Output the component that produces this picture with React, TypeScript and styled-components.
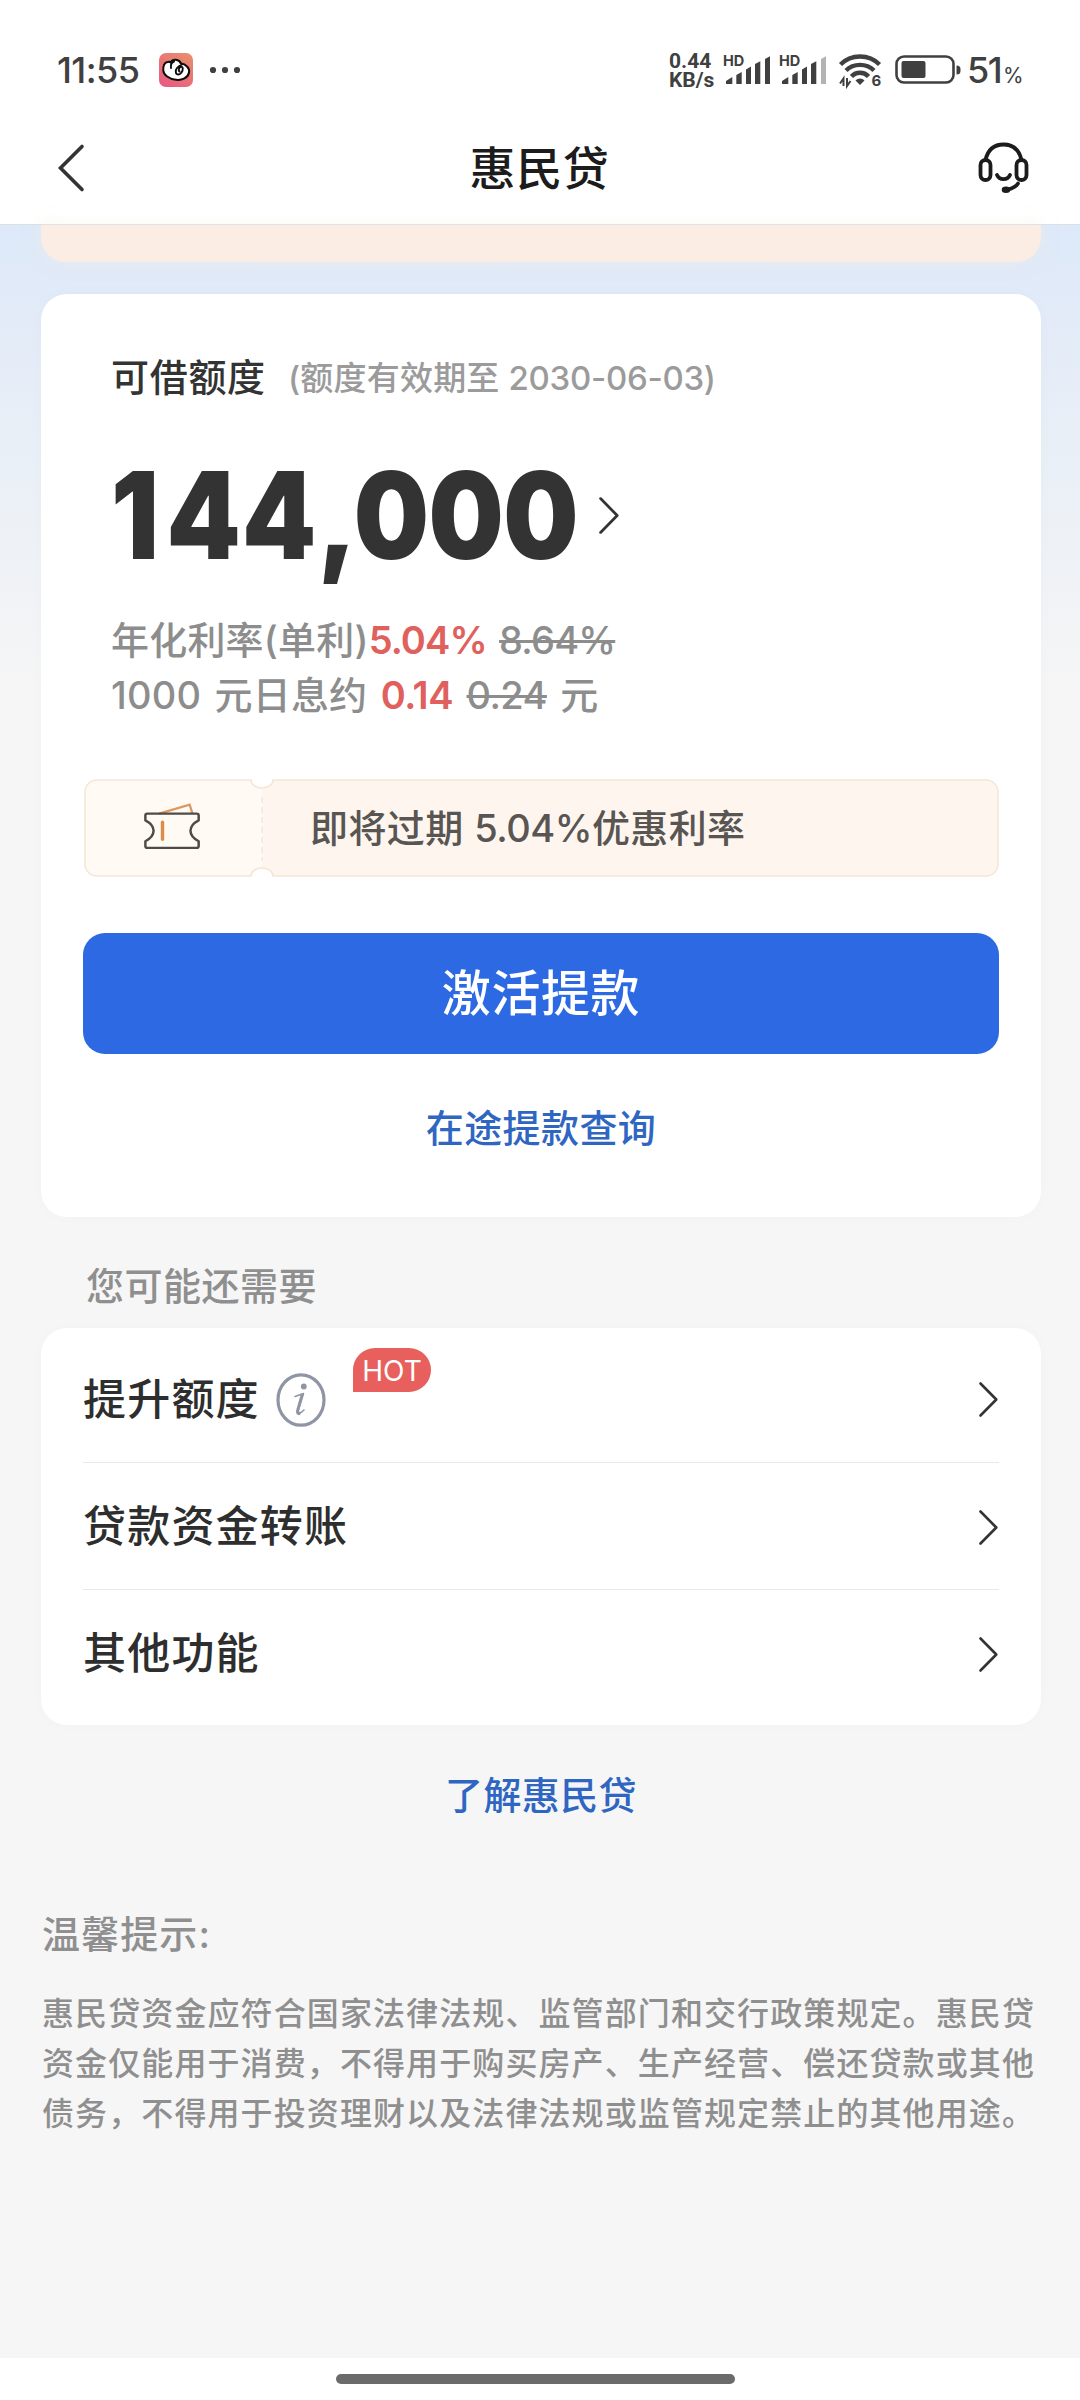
import React from 'react';
import styled, { createGlobalStyle } from 'styled-components';

const GlobalStyle = createGlobalStyle`
  * { box-sizing: border-box; }
  body {
    margin: 0;
    background: #f6f6f6;
    font-family: Inter, 'Noto Sans CJK SC', sans-serif;
    font-weight: 500;
    color: #333;
  }
  svg { display: block; flex: none; overflow: visible; }
`;

const Screen = styled.div`
  width: 1080px;
  height: 2400px;
  display: flex;
  flex-direction: column;
  overflow: hidden;
  background: #f6f6f6;
`;

const TopBar = styled.header`
  height: 225px;
  flex: none;
  background: #fff;
  border-bottom: 1px solid #dcdfe4;
`;

const StatusBar = styled.div`
  height: 112px;
  padding: 28px 55px 0 57px;
  display: flex;
  align-items: center;
  color: #404040;
`;

const Clock = styled.span`
  width: 102px;
  font-size: 36px;
  font-weight: 500;
  letter-spacing: -0.6px;
  line-height: 40px;
`;

const StatusRight = styled.div`
  margin-left: auto;
  width: 356px;
  display: flex;
  align-items: center;
`;

const NetSpeed = styled.span`
  width: 54px;
  padding-top: 2px;
  display: flex;
  flex-direction: column;
  font-family: Roboto, sans-serif;
  font-size: 21px;
  font-weight: 700;
  line-height: 19px;
  white-space: nowrap;
`;

const BatteryText = styled.span`
  margin-left: 6px;
  display: flex;
  align-items: baseline;
  font-size: 36px;
  letter-spacing: -1.6px;
  line-height: 40px;
  white-space: nowrap;
`;

const Percent = styled.span`
  margin-left: 2px;
  font-size: 21px;
  font-weight: 400;
  line-height: 24px;
`;

const NavBar = styled.nav`
  height: 112px;
  padding: 0 49px 0 58px;
  display: grid;
  grid-template-columns: 54px 1fr 54px;
  align-items: center;
`;

const NavTitle = styled.h1`
  margin: 0;
  padding-right: 10px;
  text-align: center;
  font-size: 46px;
  font-weight: 500;
  letter-spacing: 0.6px;
  line-height: 60px;
  color: #1c1c1c;
`;

const Content = styled.main`
  flex: 1;
  padding: 0 39px 0 41px;
  display: flex;
  flex-direction: column;
  background: linear-gradient(#dde9f9 0, #e3ebf8 100px, #e8eff7 210px, #eff2f6 340px, #f6f6f6 470px);
`;

const Banner = styled.div`
  height: 37px;
  flex: none;
  border-radius: 0 0 25px 25px;
  background: #fbede3;
  box-shadow: 0 0 16px rgba(245, 240, 225, 0.5);
`;

const LoanCard = styled.section`
  height: 923px;
  margin-top: 32px;
  padding: 0 42px;
  flex: none;
  border-radius: 26px;
  background: #fff;
  box-shadow: 0 0 16px rgba(0, 0, 0, 0.02);
  display: flex;
  flex-direction: column;
`;

const Quota = styled.div`
  padding: 58px 0 0 28px;
`;

const QuotaHead = styled.div`
  height: 50px;
  display: flex;
  align-items: center;
  white-space: nowrap;
`;

const QuotaTitle = styled.h2`
  width: 177px;
  margin: 0;
  font-size: 38px;
  font-weight: 500;
  letter-spacing: 0.7px;
  line-height: 48px;
`;

const QuotaNote = styled.span`
  padding-top: 2px;
  font-size: 33px;
  line-height: 50px;
  letter-spacing: 0.2px;
  color: #9b9b9b;
`;

const QuotaDate = styled.span`
  letter-spacing: -0.3px;
`;

const AmountRow = styled.div`
  height: 130px;
  margin-top: 48px;
  display: flex;
  align-items: center;
`;

const Amount = styled.span`
  width: 488px;
  font-size: 121px;
  font-weight: 900;
  line-height: 130px;
  white-space: nowrap;
  transform: scaleX(0.875);
  transform-origin: 0 50%;
`;

const Digits = styled.span<{ $track: number }>`
  letter-spacing: ${(p) => p.$track}px;
`;

const Rates = styled.div`
  margin-top: 33px;
  font-size: 38px;
  line-height: 55px;
  letter-spacing: 0.2px;
  color: #8d8d8d;
  white-space: pre;
`;

const RateLine = styled.div<{ $gap?: number }>`
  height: 55px;
  word-spacing: ${(p) => p.$gap ?? 0}px;
`;

const Hot = styled.span<{ $track?: number }>`
  font-weight: 600;
  letter-spacing: ${(p) => p.$track ?? 0}px;
  color: #e0605e;
`;

const Old = styled.s<{ $track?: number }>`
  letter-spacing: ${(p) => p.$track ?? 0}px;
`;

const Coupon = styled.div`
  position: relative;
  height: 98px;
  margin-top: 56px;
  display: grid;
  grid-template-columns: 227px 1fr;
  align-items: center;
`;

const CouponShape = styled.svg`
  position: absolute;
  inset: 0;
`;

const CouponIcon = styled.svg`
  position: relative;
  margin: 0 0 4px 60px;
`;

const CouponText = styled.span`
  position: relative;
  font-size: 38px;
  line-height: 50px;
  letter-spacing: 0.4px;
  color: #595553;
  white-space: pre;
`;

const CouponRate = styled.span`
  letter-spacing: -0.5px;
`;

const PrimaryButton = styled.button`
  height: 121px;
  margin: 56px 0 0;
  padding: 0;
  border: 0;
  border-radius: 22px;
  background: #2c69e2;
  color: #fff;
  font: inherit;
  font-size: 49px;
  letter-spacing: 0.6px;
  line-height: 60px;
`;

const TextLink = styled.a<{ $top: number }>`
  margin-top: ${(p) => p.$top}px;
  text-align: center;
  font-size: 38px;
  letter-spacing: 0.4px;
  line-height: 50px;
  color: #2f66c2;
`;

const SectionTitle = styled.h3`
  margin: 44px 0 0 45px;
  height: 67px;
  font-size: 38px;
  font-weight: 500;
  letter-spacing: 0.5px;
  line-height: 50px;
  color: #8f8f8f;
`;

const MenuCard = styled.section`
  height: 397px;
  padding: 7px 42px 0;
  flex: none;
  border-radius: 26px;
  background: #fff;
  box-shadow: 0 0 16px rgba(0, 0, 0, 0.02);
`;

const MenuRow = styled.div`
  position: relative;
  height: 127px;
  padding: 2px 1px 0 0;
  display: flex;
  align-items: center;
  & + & { border-top: 1px solid #e9e9e9; }
  & > svg:last-child { margin-left: auto; }
`;

const MenuLabel = styled.span`
  margin-top: -2px;
  font-size: 43px;
  letter-spacing: 1.2px;
  line-height: 60px;
  color: #2e2e2e;
`;

const InfoIcon = styled.svg`
  margin-left: 16px;
`;

const HotBadge = styled.span`
  position: absolute;
  left: 270px;
  top: 13px;
  width: 78px;
  height: 44px;
  border-radius: 22px 22px 22px 0;
  background: #e8605d;
  color: #fff;
  font-size: 28px;
  font-weight: 400;
  letter-spacing: 0;
  line-height: 46px;
  text-align: center;
`;

const Tips = styled.footer`
  margin-top: 87px;
  color: #8f8f8f;
`;

const TipsTitle = styled.h4`
  margin: 0 0 0 1px;
  font-size: 38px;
  font-weight: 500;
  letter-spacing: 1.1px;
  line-height: 54px;
`;

const TipsLine = styled.p`
  margin: 0 0 0 1px;
  font-size: 32px;
  letter-spacing: 1.1px;
  line-height: 50px;
  white-space: nowrap;
`;

const TipsBody = styled.div`
  margin-top: 28px;
`;

const HomeArea = styled.div`
  height: 42px;
  padding: 16px 0 0 336px;
  flex: none;
  background: #fff;
`;

const HomeBar = styled.div`
  width: 399px;
  height: 10px;
  border-radius: 5px;
  background: #6b6b6b;
`;

const AppBadge = () => (
  <svg width="34" height="34" viewBox="0 0 34 34">
    <defs>
      <linearGradient id="badge" x1="0.8" y1="0" x2="0.2" y2="1">
        <stop offset="0" stopColor="#e88d6c" />
        <stop offset="1" stopColor="#ea5a80" />
      </linearGradient>
    </defs>
    <rect width="34" height="34" rx="7" fill="url(#badge)" />
    <path
      d="M11.500 9.500C14 5.500 20 6 22 10.500C26.500 11 31 15 30 19.500C29 25 23 27.500 17 26.800C10 26 4.500 22 4.300 17.500C4 14 5 9 9 9C10 8.700 11 9 11.500 9.500Z"
      fill="#fff" stroke="#0c0c0c" strokeWidth="2" strokeLinejoin="round"
    />
    <path d="M12 15C11.500 12 12.500 9.500 15 8.500M23 11.500C19.500 13 16.500 16 16.800 19C17 22 20.500 22.500 22.500 19.500C24.500 16.500 24 13.500 22 13.800C20 14.200 19 17 20.500 18.500" fill="none" stroke="#0c0c0c" strokeWidth="1.900" strokeLinecap="round" />
  </svg>
);

const Dots = () => (
  <svg width="30" height="8" viewBox="0 0 30 8" fill="#404040">
    <circle cx="3" cy="4" r="3.100" /><circle cx="15" cy="4" r="3.100" /><circle cx="27" cy="4" r="3.100" />
  </svg>
);

const SignalText = styled.text`
  font: 700 14.5px Inter, sans-serif;
`;

const Signal = ({ weak }: { weak?: boolean }) => (
  <svg width="48" height="32" viewBox="0 0 48 32" fill="#404040">
    <SignalText x="0" y="11.500">HD</SignalText>
    <path d="M3 30V27L9.300 23V30Z" />
    <path d="M13.300 30V21L18.700 18V30Z" />
    <path d="M23 30V15.500L28 12.500V30Z" />
    <path d="M32 30V10L37.300 7.300V30Z" />
    <path d="M42 30V5L47 2.300V30Z" fill={weak ? '#b3b3b3' : '#404040'} />
  </svg>
);

const WifiText = styled.text`
  font: 700 15px Inter, sans-serif;
`;

const Wifi = () => (
  <svg width="42" height="34" viewBox="0 0 42 34" fill="none" stroke="#404040" strokeWidth="4.400">
    <path d="M1.500 11.500C12 .800 30 .800 40.500 11.500" />
    <path d="M7 17.500C14.500 10 27.500 10 35 17.500" />
    <path d="M12.500 23.500C17 18.500 25 18.500 29.500 23.500" />
    <path d="M16.500 27.500C19 24.800 23 24.800 25.500 27.500L21 32Z" fill="#404040" stroke="none" />
    <path d="M4.500 33V25.500L1 30.500M8 25V33L11.500 28" strokeWidth="2" />
    <WifiText x="32.500" y="33" fill="#404040" stroke="none">6</WifiText>
  </svg>
);

const Battery = () => (
  <svg width="66" height="30" viewBox="0 0 66 30">
    <rect x="1.500" y="1.500" width="57" height="26" rx="7.500" fill="none" stroke="#404040" strokeWidth="2.600" />
    <rect x="6.500" y="6" width="24" height="17" rx="2" fill="#404040" />
    <path d="M61.500 10.500Q65.500 10.500 65.500 14V16Q65.500 19.500 61.500 19.500Z" fill="#404040" />
  </svg>
);

const BackIcon = () => (
  <svg width="27" height="46" viewBox="0 0 27 46">
    <path d="M24 1.500L2.500 23L24 44.500" fill="none" stroke="#333" strokeWidth="3.600" strokeLinecap="round" />
  </svg>
);

const HeadsetIcon = () => (
  <svg width="54" height="54" viewBox="0 0 54 54" fill="none" stroke="#1c1c1c" strokeWidth="3.800" strokeLinecap="round">
    <path d="M8.500 19C11 8 18 3.500 26.500 3.500C35 3.500 42 8 44.500 19" />
    <rect x="3.500" y="19" width="10" height="20" rx="5" />
    <rect x="39.500" y="19" width="10" height="20" rx="5" />
    <path d="M20 34C22.500 39.500 30.500 39.500 33 34" />
    <path d="M41 42.500C39 45.500 35 47.500 31 48.500" />
    <ellipse cx="29" cy="48.800" rx="2.800" ry="1.800" fill="#1c1c1c" strokeWidth="3" />
  </svg>
);

const Chevron = ({ w = 19, h = 35 }: { w?: number; h?: number }) => (
  <svg width={w} height={h} viewBox="0 0 19 35" preserveAspectRatio="none">
    <path d="M1.500 1.500L17.300 17.500L1.500 33.500" fill="none" stroke="#333" strokeWidth="2.600" strokeLinecap="round" strokeLinejoin="round" />
  </svg>
);

const Info = () => (
  <InfoIcon width="50" height="58" viewBox="0 0 50 58" fill="none" stroke="#8f95a5">
    <ellipse cx="25" cy="29" rx="23" ry="25.200" strokeWidth="3.200" />
    <circle cx="27.800" cy="15.500" r="2.900" fill="#8f95a5" stroke="none" />
    <path d="M19 25.500L27.500 22.500L22.500 39C21.800 42.500 24 43 28 39" strokeWidth="1.600" strokeLinecap="round" strokeLinejoin="round" />
    <path d="M26 24L21.500 39.500C21 42 22 43 23.500 42.500" strokeWidth="2.800" strokeLinecap="round" />
  </InfoIcon>
);

const menu = [
  { title: '提升额度', info: true, hot: true },
  { title: '贷款资金转账' },
  { title: '其他功能' },
];

const tips = [
  '惠民贷资金应符合国家法律法规、监管部门和交行政策规定。惠民贷',
  '资金仅能用于消费，不得用于购买房产、生产经营、偿还贷款或其他',
  '债务，不得用于投资理财以及法律法规或监管规定禁止的其他用途。',
];

const LeftIcons = styled.div`
  display: flex;
  align-items: center;
  gap: 17px;
`;

const StatusIcons = styled.div`
  display: flex;
  align-items: center;
  & > svg:nth-child(2) { margin-left: 8px; }
  & > svg:nth-child(3) { margin-left: 12px; }
  & > svg:nth-child(4) { margin-left: 14px; }
`;

export default function App() {
  return (
    <Screen lang="zh-CN">
      <GlobalStyle />
      <TopBar>
        <StatusBar>
          <Clock>11:55</Clock>
          <LeftIcons><AppBadge /><Dots /></LeftIcons>
          <StatusRight>
            <NetSpeed><span>0.44</span><span>KB/s</span></NetSpeed>
            <StatusIcons><Signal /><Signal weak /><Wifi /><Battery /></StatusIcons>
            <BatteryText>51<Percent>%</Percent></BatteryText>
          </StatusRight>
        </StatusBar>
        <NavBar>
          <BackIcon />
          <NavTitle>惠民贷</NavTitle>
          <HeadsetIcon />
        </NavBar>
      </TopBar>
      <Content>
        <Banner />
        <LoanCard>
          <Quota>
            <QuotaHead>
              <QuotaTitle>可借额度</QuotaTitle>
              <QuotaNote>(额度有效期至 <QuotaDate>2030-06-03)</QuotaDate></QuotaNote>
            </QuotaHead>
            <AmountRow>
              <Amount>
                <Digits $track={8.6}>1</Digits>
                <Digits $track={1.5}>44</Digits>
                <Digits $track={-4}>,</Digits>
                <Digits $track={-0.6}>000</Digits>
              </Amount>
              <Chevron w={20} h={37} />
            </AmountRow>
            <Rates>
              <RateLine $gap={2}>年化利率(单利)<Hot $track={-0.9}>5.04%</Hot> <Old $track={-0.8}>8.64%</Old></RateLine>
              <RateLine $gap={3}>1000 元日息约 <Hot $track={-0.4}>0.14</Hot> <Old $track={-0.6}>0.24</Old> 元</RateLine>
            </Rates>
          </Quota>
          <Coupon>
            <CouponShape width="916" height="98" viewBox="0 0 916 98">
              <path d="M14 1H168A11 8 0 0 0 179 8V90A11 8 0 0 0 168 97H14A12 12 0 0 1 2 85V13A12 12 0 0 1 14 1Z" fill="#fffaf4" />
              <path d="M179 8A11 8 0 0 0 190 1H903A12 12 0 0 1 915 13V85A12 12 0 0 1 903 97H190A11 8 0 0 0 179 90Z" fill="#fef6ee" />
              <path d="M14 1H168A11 8 0 0 0 190 1H903A12 12 0 0 1 915 13V85A12 12 0 0 1 903 97H190A11 8 0 0 0 168 97H14A12 12 0 0 1 2 85V13A12 12 0 0 1 14 1Z" fill="none" stroke="#f4e6d6" strokeWidth="1.500" />
              <path d="M179 18V82" stroke="#f6ebe1" strokeWidth="2" strokeDasharray="6 4" />
            </CouponShape>
            <CouponIcon width="59" height="50" viewBox="0 0 62 52" fill="none">
              <path d="M17 13L49 3.500L52 13" stroke="#dc995f" strokeWidth="2.400" />
              <path d="M4.500 13H56.500Q58.500 13 58.500 15V20C47 26 47 36 58.500 42V47Q58.500 49 56.500 49H4.500Q2.500 49 2.500 47V42C14 36 14 26 2.500 20V15Q2.500 13 4.500 13Z" stroke="#504b49" strokeWidth="2.600" strokeLinejoin="round" />
              <path d="M20.500 22V40" stroke="#dc8d4c" strokeWidth="3.600" strokeLinecap="round" />
            </CouponIcon>
            <CouponText>即将过期 <CouponRate>5.04%</CouponRate>优惠利率</CouponText>
          </Coupon>
          <PrimaryButton>激活提款</PrimaryButton>
          <TextLink $top={49}>在途提款查询</TextLink>
        </LoanCard>
        <SectionTitle>您可能还需要</SectionTitle>
        <MenuCard>
          {menu.map((m) => (
            <MenuRow key={m.title}>
              <MenuLabel>{m.title}</MenuLabel>
              {m.info && <Info />}
              {m.hot && <HotBadge>HOT</HotBadge>}
              <Chevron />
            </MenuRow>
          ))}
        </MenuCard>
        <TextLink $top={45}>了解惠民贷</TextLink>
        <Tips>
          <TipsTitle>温馨提示:</TipsTitle>
          <TipsBody>
            {tips.map((t) => <TipsLine key={t}>{t}</TipsLine>)}
          </TipsBody>
        </Tips>
      </Content>
      <HomeArea><HomeBar /></HomeArea>
    </Screen>
  );
}
